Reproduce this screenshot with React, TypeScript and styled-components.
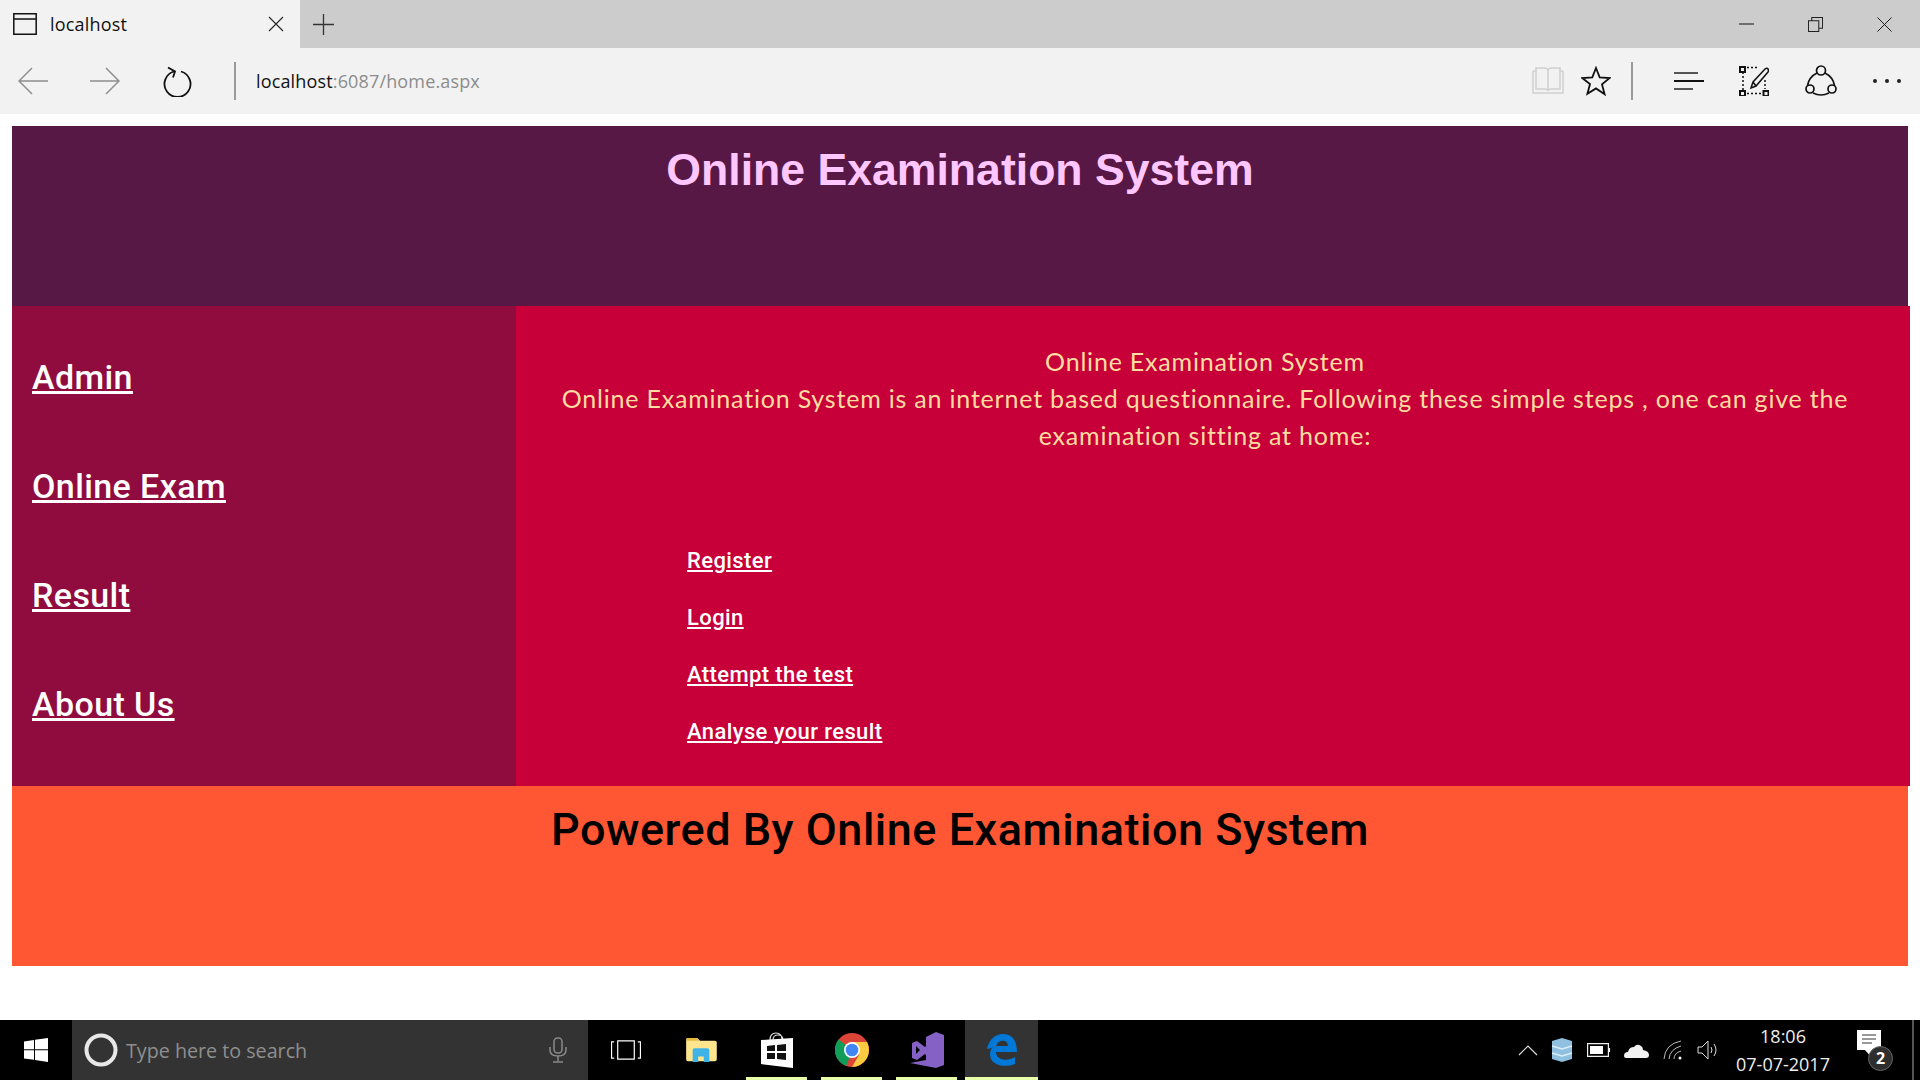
import React from "react";
import styled, { createGlobalStyle } from "styled-components";

const Global = createGlobalStyle`
  html, body { margin: 0; padding: 0; background: #fff; }
  #root { width: 1920px; height: 1080px; overflow: hidden; }
  * { box-sizing: border-box; }
`;

const Screen = styled.div`
  width: 1920px;
  height: 1080px;
  display: flex;
  flex-direction: column;
  font-family: "Open Sans", "Liberation Sans", sans-serif;
`;

const TabBar = styled.div`
  height: 48px;
  flex: none;
  background: #cccccc;
  display: flex;
  align-items: center;
`;

const Tab = styled.div`
  width: 300px;
  height: 48px;
  background: #f2f2f2;
  display: flex;
  align-items: center;
  padding: 0 16px 0 13px;
  gap: 13px;
  font-size: 18px;
  color: #111;
`;

const TabTitle = styled.span`
  flex: 1;
  letter-spacing: 0.2px;
  margin-top: -1px;
`;

const NewTab = styled.div`
  margin-left: 13px;
  display: flex;
`;

const WindowControls = styled.div`
  margin-left: auto;
  display: flex;
  align-items: center;
  gap: 54px;
  padding-right: 28px;
`;

const Toolbar = styled.div`
  height: 66px;
  flex: none;
  background: #f2f2f2;
  display: flex;
  align-items: center;
  padding-left: 18px;
`;

const NavIcons = styled.div`
  display: flex;
  align-items: center;
  gap: 42px;
`;

const Divider = styled.div`
  width: 2px;
  height: 38px;
  background: #9a9a9a;
`;

const AddressDivider = styled(Divider)`
  margin-left: 40px;
`;

const Address = styled.div`
  margin-left: 20px;
  font-size: 18px;
  letter-spacing: 0.15px;
  color: #8c8c8c;
`;

const Host = styled.span`
  color: #111;
`;

const ToolRight = styled.div`
  margin-left: auto;
  display: flex;
  align-items: center;
  padding-right: 18px;
`;

const ReadGroup = styled.div`
  display: flex;
  align-items: center;
  gap: 17px;
  margin-right: 20px;
`;

const HubGroup = styled.div`
  display: flex;
  align-items: center;
  gap: 35.5px;
  margin-left: 41px;
`;

const Page = styled.div`
  flex: 1;
  padding: 12px 0 0 12px;
  background: #fff;
  min-height: 0;
`;

const Banner = styled.header<{ $bg: string; $color: string }>`
  width: 1896px;
  height: 180px;
  background: ${(p) => p.$bg};
  color: ${(p) => p.$color};
  font-family: "Liberation Sans", Arial, sans-serif;
  font-weight: 700;
  font-size: 44.6px;
  line-height: 50px;
  padding-top: 19px;
  text-align: center;
`;

const FooterBanner = styled(Banner)`
  font-family: Roboto, "Liberation Sans", sans-serif;
  font-weight: 500;
  font-size: 45px;
  letter-spacing: 0.5px;
`;

const Middle = styled.div`
  display: flex;
  width: 1898px;
  height: 480px;
`;

const Sidebar = styled.nav`
  width: 504px;
  background: #900c3f;
  display: flex;
  flex-direction: column;
  align-items: flex-start;
  gap: 72px;
  padding: 53px 0 0 20px;
`;

const SideLink = styled.a`
  font-family: Roboto, "Liberation Sans", sans-serif;
  font-weight: 500;
  font-size: 34px;
  letter-spacing: 0.4px;
  line-height: 37px;
  color: #fff;
  text-decoration: underline;
`;

const Content = styled.main`
  flex: 1;
  background: #c70039;
  display: flex;
  flex-direction: column;
`;

const Intro = styled.p`
  margin: 37px 0 0;
  width: 1378px;
  text-align: center;
  font-family: Lato, sans-serif;
  font-size: 25px;
  line-height: 37px;
  letter-spacing: 0.8px;
  color: #ffdca0;
`;

const Steps = styled.div`
  margin: 94px 0 0 171px;
  display: flex;
  flex-direction: column;
  align-items: flex-start;
  gap: 31px;
`;

const StepLink = styled.a`
  font-family: Roboto, "Liberation Sans", sans-serif;
  font-weight: 500;
  font-size: 22px;
  letter-spacing: 0.4px;
  line-height: 26px;
  color: #fff;
  text-decoration: underline;
`;

const Taskbar = styled.footer`
  height: 60px;
  flex: none;
  background: #000;
  display: flex;
  align-items: stretch;
  color: #fff;
`;

const StartCell = styled.div`
  width: 72px;
  display: flex;
  align-items: center;
  justify-content: center;
`;

const SearchBox = styled.div`
  width: 516px;
  background: #333;
  display: flex;
  align-items: center;
  padding: 0 21px 0 12px;
  gap: 8px;
  color: #8f8f8f;
  font-size: 19.7px;
`;

const SearchText = styled.span`
  flex: 1;
`;

const TaskCell = styled.div<{ $w: number; $active?: boolean; $open?: boolean }>`
  width: ${(p) => p.$w}px;
  margin-left: ${(p) => (p.$active ? 1 : 0)}px;
  position: relative;
  display: flex;
  align-items: center;
  justify-content: center;
  background: ${(p) => (p.$active ? "#333" : "transparent")};
  &::after {
    content: "";
    display: ${(p) => (p.$open ? "block" : "none")};
    position: absolute;
    left: ${(p) => (p.$active ? 0 : 7)}px;
    right: ${(p) => (p.$active ? 0 : 7)}px;
    bottom: 0;
    height: 3px;
    background: #e6ffa8;
  }
`;

const Tray = styled.div`
  margin-left: auto;
  display: flex;
  align-items: center;
  padding-right: 6px;
`;

const TrayIcons = styled.div`
  display: flex;
  align-items: center;
  gap: 13.6px;
`;

const Clock = styled.div`
  width: 100px;
  margin-left: 14.5px;
  text-align: center;
  font-size: 18px;
  line-height: 28px;
  color: #eee;
`;

const Notify = styled.div`
  position: relative;
  margin-left: 24px;
  width: 36px;
  height: 40px;
`;

const Badge = styled.div`
  position: absolute;
  left: 11px;
  top: 16px;
  width: 25px;
  height: 25px;
  border-radius: 50%;
  background: #2e2e2e;
  border: 1px solid #666;
  color: #fff;
  font-size: 16px;
  font-weight: 700;
  line-height: 22px;
  text-align: center;
`;

const EdgeLine = styled.div`
  width: 2px;
  background: #555;
  margin-left: 19px;
  align-self: stretch;
`;

const line = { fill: "none", stroke: "currentColor" } as const;

const Back = () => (
  <svg width="30" height="30" viewBox="0 0 30 30" {...line} color="#8f8f8f" strokeWidth="1.5">
    <path d="M30 15H1M14 2 1 15l13 13" />
  </svg>
);
const Forward = () => (
  <svg width="30" height="30" viewBox="0 0 30 30" {...line} color="#8f8f8f" strokeWidth="1.5">
    <path d="M0 15h29M16 2l13 13-13 13" />
  </svg>
);
const Refresh = () => (
  <svg width="32" height="32" viewBox="-1 0 32 32" {...line} color="#111" strokeWidth="1.8">
    <path d="M18 5.5a13 13 0 1 1-7 0M5 1.5l7 4-2 6" transform="translate(0 1)" />
  </svg>
);

export default function App() {
  return (
    <Screen>
      <Global />
      <TabBar>
        <Tab>
          <svg width="24" height="22" viewBox="0 0 24 22" {...line} color="#111" strokeWidth="1.5">
            <path d="M.8.8h22.400v20.400H.8zM.8 6h22.400" />
          </svg>
          <TabTitle>localhost</TabTitle>
          <svg width="16" height="16" viewBox="0 0 16 16" {...line} color="#222" strokeWidth="1.1">
            <path d="M1 1l14 14M15 1 1 15" />
          </svg>
        </Tab>
        <NewTab>
          <svg width="21" height="21" viewBox="0 0 21 21" {...line} color="#333" strokeWidth="1.3">
            <path d="M10.500 0v21M0 10.500h21" />
          </svg>
        </NewTab>
        <WindowControls>
          <svg width="15" height="2" viewBox="0 0 15 2" {...line} color="#111">
            <path d="M0 1h15" />
          </svg>
          <svg width="15" height="15" viewBox="0 0 16 16" {...line} color="#222" strokeWidth="1.1">
            <path d="M.5 4h11v11.500H.5zM4 4V.5h11.500V12H11.500" />
          </svg>
          <svg width="15" height="15" viewBox="0 0 16 16" {...line} color="#111" strokeWidth="1">
            <path d="M.5.5l15 15M15.500.5l-15 15" />
          </svg>
        </WindowControls>
      </TabBar>
      <Toolbar>
        <NavIcons>
          <Back />
          <Forward />
          <Refresh />
        </NavIcons>
        <AddressDivider />
        <Address>
          <Host>localhost</Host>:6087/home.aspx
        </Address>
        <ToolRight>
          <ReadGroup>
            <svg width="32" height="28" viewBox="0 0 32 28" {...line} color="#cfcfcf" strokeWidth="1.500">
              <path d="M1 4h3M28 4h3M1 4v22h30V4M4 1h8q4 0 4 3v20q0-2-4-2H4zM28 1h-8q-4 0-4 3v20q0-2 4-2h8z" />
            </svg>
            <svg width="30" height="30" viewBox="0 0 30 30" {...line} color="#111" strokeWidth="1.800">
              <path d="M15 2l3.700 9.400 10 .6-7.700 6.400 2.600 9.800L15 22.400 6.400 27.800 9 18 1.300 12l10-.6z" />
            </svg>
          </ReadGroup>
          <Divider />
          <HubGroup>
            <svg width="30" height="20" viewBox="0 0 30 20" {...line} color="#111" strokeWidth="2">
              <path d="M0 2h24" stroke="#555" />
              <path d="M0 10h30" />
              <path d="M0 18h19" stroke="#555" />
            </svg>
            <svg width="30" height="30" viewBox="0 0 30 30" {...line} color="#111" strokeWidth="1.500">
              <path d="M4 6v19M8 1.500h10M8 27.500h14M26 14v9" strokeDasharray="2 2" />
              <path d="M1 1h5v5H1zM1 25h5v5H1zM24.500 25h5v5h-5z" strokeWidth="2" />
              <path d="M12 22l2-6L26 3q2-1.500 3 0t0 3L17 20zM14 16l3 4" />
            </svg>
            <svg width="32" height="32" viewBox="0 0 32 32" {...line} color="#111" strokeWidth="1.700">
              <circle cx="16" cy="5.500" r="4.500" />
              <circle cx="5" cy="24" r="4" />
              <circle cx="27" cy="24" r="4" />
              <path d="M12 8Q4 12 2.500 20.500M20 8q8 4 9.500 12.500M8 28q8 4 16 0" />
            </svg>
            <svg width="30" height="6" viewBox="0 0 30 6" fill="#222">
              <circle cx="3" cy="3" r="2" />
              <circle cx="15" cy="3" r="2" />
              <circle cx="27" cy="3" r="2" />
            </svg>
          </HubGroup>
        </ToolRight>
      </Toolbar>
      <Page>
        <Banner $bg="#581845" $color="#ffc6ff">Online Examination System</Banner>
        <Middle>
          <Sidebar>
            <SideLink href="#">Admin</SideLink>
            <SideLink href="#">Online Exam</SideLink>
            <SideLink href="#">Result</SideLink>
            <SideLink href="#">About Us</SideLink>
          </Sidebar>
          <Content>
            <Intro>
              Online Examination System
              <br />
              Online Examination System is an internet based questionnaire. Following these simple steps , one can give the examination sitting at home:
            </Intro>
            <Steps>
              <StepLink href="#">Register</StepLink>
              <StepLink href="#">Login</StepLink>
              <StepLink href="#">Attempt the test</StepLink>
              <StepLink href="#">Analyse your result</StepLink>
            </Steps>
          </Content>
        </Middle>
        <FooterBanner $bg="#ff5733" $color="#000">Powered By Online Examination System</FooterBanner>
      </Page>
      <Taskbar>
        <StartCell>
          <svg width="24" height="24" viewBox="0 0 24 24" fill="#fff">
            <path d="M0 3.500 10 2v9.300H0zM11 1.800 24 0v11.300H11zM0 12.300h10v9.500L0 20.400zM11 12.300h13V24l-13-1.900z" />
          </svg>
        </StartCell>
        <SearchBox>
          <svg width="34" height="34" viewBox="0 0 34 34" fill="none">
            <circle cx="17" cy="17" r="14.500" stroke="#e8e8e8" strokeWidth="4" />
          </svg>
          <SearchText>Type here to search</SearchText>
          <svg width="18" height="26" viewBox="0 0 18 26" fill="none" stroke="#8a8a8a" strokeWidth="1.500">
            <rect x="5" y="1" width="8" height="15" rx="3.500" />
            <path d="M1 10v3q0 6 8 6t8-6v-3M9 19v5M4 25h10" />
          </svg>
        </SearchBox>
        <TaskCell $w={75}>
          <svg width="30" height="20" viewBox="0 0 38 22" preserveAspectRatio="none" fill="none" stroke="#fff" strokeWidth="1.500">
            <path d="M8.500 1h21v20h-21zM4 2H.7v18H4M34 2h3.300v18H34" />
          </svg>
        </TaskCell>
        <TaskCell $w={76}>
          <svg width="32" height="26" viewBox="0 0 34 28">
            <path d="M1 3q0-2 2-2h10l3 3h16q2 0 2 2v18q0 2-2 2H3q-2 0-2-2z" fill="#fde58e" />
            <path d="M1 3q0-2 2-2h10l2 3H1z" fill="#e6b83f" />
            <path d="M8 14q0-2 2-2h14q2 0 2 2v13h-6v-6h-6v6H8z" fill="#3fb3e6" />
          </svg>
        </TaskCell>
        <TaskCell $w={75} $open>
          <svg width="34" height="38" viewBox="0 0 34 38">
            <path d="M10 9q0-7 6-7t6 7M13 9q0-5 5-5t5 5" fill="none" stroke="#ddd" strokeWidth="1.200" />
            <path d="M1 9l32-2v30L1 33z" fill="#fff" />
            <path d="M7 15l8-1v6H7zM17 14l9-1v7h-9zM7 22h8v6H7zM17 22h9v7l-9-1z" fill="#111" />
          </svg>
        </TaskCell>
        <TaskCell $w={75} $open>
          <svg width="34" height="34" viewBox="0 0 34 34">
            <circle cx="17" cy="17" r="17" fill="#db4437" />
            <path d="M17 17 3.500 6.600A17 17 0 0 0 11 33L18 17z" fill="#0f9d58" />
            <path d="M17 9h15a17 17 0 0 1-15 25l7-12z" fill="#fdcb3f" />
            <circle cx="17" cy="17" r="8" fill="#fff" />
            <circle cx="17" cy="17" r="6.300" fill="#4285f4" />
          </svg>
        </TaskCell>
        <TaskCell $w={75} $open>
          <svg width="36" height="36" viewBox="0 0 36 36">
            <path d="M27 0l8 3v30l-8 3-26-5 16-3V5z" fill="#8661c5" />
            <path d="M3 11l5-2 8 6 3-3v13l-3-3-8 6-5-2zM7 14v8l4-4z" fill="#8661c5" fillRule="evenodd" />
          </svg>
        </TaskCell>
        <TaskCell $w={73} $active $open>
          <svg width="32" height="32" viewBox="0 0 32 32">
            <path d="M1 15C3 5 10 0 17 0c9 0 14 6 14 18H10c0 8 11 10 19 5v7c-10 4-25 2-25-10 0-3 1-5 3-7-2 1-4 2-6 2zM10 12h12c0-7-10-7-12 0z" fill="#0078d7" fillRule="evenodd" />
          </svg>
        </TaskCell>
        <Tray>
          <TrayIcons>
            <svg width="20" height="12" viewBox="0 0 20 12" fill="none" stroke="#ddd" strokeWidth="1.200">
              <path d="M1 11 10 2l9 9" />
            </svg>
            <svg width="22" height="24" viewBox="0 0 22 24">
              <path d="M1 3l10-3 10 3v18l-10 3-10-3z" fill="#8fc0e0" />
              <path d="M1 8l10 3 10-3M1 15l10 3 10-3" fill="none" stroke="#dbeef8" strokeWidth="1.500" />
            </svg>
            <svg width="24" height="14" viewBox="0 0 24 14" fill="none" stroke="#eee" strokeWidth="1.200">
              <path d="M.6.6h20.800v12.800H.6z" />
              <path d="M3 3h13v8H3z" fill="#fff" stroke="none" />
              <path d="M22.500 5v4" />
            </svg>
            <svg width="25" height="15" viewBox="0 0 25 15" fill="#f2f2f2">
              <path d="M0 13q0-4 4-4 1-5 6-5 3-4 7-1 2 1 2 4 6 1 6 5 0 3-3 3H2q-2 0-2-2z" />
            </svg>
            <svg width="20" height="20" viewBox="0 0 20 20" fill="none" stroke="#bbb" strokeWidth="1">
              <path d="M1 19Q2 4 18 1M6 19Q7 9 18 6M11 19q0-6 7-8" />
              <circle cx="17" cy="18" r="1.500" fill="#fff" stroke="none" />
            </svg>
            <svg width="22" height="20" viewBox="0 0 22 20" fill="none" stroke="#ddd" strokeWidth="1">
              <path d="M1 7h4l6-6v18l-6-6H1zM14 7q2 3 0 6M17 4q4 6 0 12" />
            </svg>
          </TrayIcons>
          <Clock>
            18:06
            <br />
            07-07-2017
          </Clock>
          <Notify>
            <svg width="24" height="30" viewBox="0 0 24 30">
              <path d="M0 0h24v20H16l-1 8-7-8H0z" fill="#fff" />
              <path d="M5 5h14M5 9h14M5 13h10" stroke="#333" strokeWidth="1" />
            </svg>
            <Badge>2</Badge>
          </Notify>
          <EdgeLine />
        </Tray>
      </Taskbar>
    </Screen>
  );
}
